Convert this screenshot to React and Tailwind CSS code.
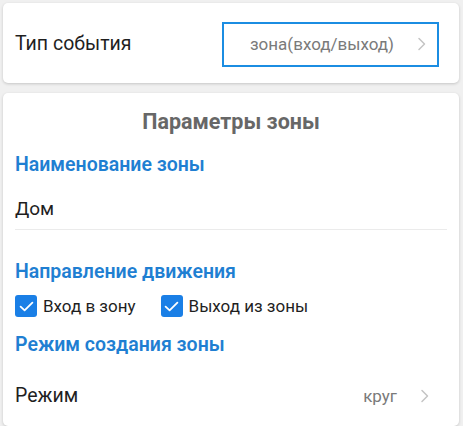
import React from 'react';

function Chevron() {
  return (
    <svg width="10" height="14" viewBox="0 0 10 14" fill="none" className="shrink-0">
      <path d="M2 1.5l5.5 5.5L2 12.5" stroke="#c4c4c4" strokeWidth="1.5" strokeLinecap="round" strokeLinejoin="round" />
    </svg>
  );
}

function Check({ label }) {
  return (
    <label className="flex items-center gap-[6px]">
      <span className="w-[22px] h-[22px] rounded-[3px] bg-[#1a7fe6] flex items-center justify-center">
        <svg width="15" height="11" viewBox="0 0 15 11" fill="none">
          <path d="M1.6 5.6l4 3.7L13.4 1.6" stroke="#fff" strokeWidth="1.8" strokeLinecap="round" strokeLinejoin="round" />
        </svg>
      </span>
      <span className="text-[17px] text-[#1f1f1f] leading-[22px]">{label}</span>
    </label>
  );
}

export default function App() {
  return (
    <div className="w-[463px] h-[426px] overflow-hidden bg-[#f0f0f0] pl-[3px] pr-[4px] pt-[3px] flex flex-col gap-[10px]" style={{ fontFamily: 'Roboto, "Noto Sans", sans-serif' }}>
      {/* event type */}
      <div className="bg-white rounded-[5px] shadow-[0_1px_3px_rgba(0,0,0,0.18)] h-[80px] shrink-0 flex items-center justify-between pl-[12px] pr-[20px] pt-[2px]">
        <span className="text-[19.5px] text-[#1f1f1f] leading-[26px]">Тип события</span>
        <div className="w-[217px] h-[45px] border-2 border-[#1b8de2] flex items-center justify-end gap-[23px] pr-[10px]">
          <span className="text-[17px] text-[#7a7a7a] leading-[22px]">зона(вход/выход)</span>
          <Chevron />
        </div>
      </div>

      {/* zone params */}
      <div className="bg-white rounded-[5px] shadow-[0_1px_3px_rgba(0,0,0,0.18)] flex-1 px-[12px] pt-[15px]">
        <h2 className="text-center text-[21.5px] font-bold text-[#676767] leading-[28px]">Параметры зоны</h2>

        <div className="mt-[16px] text-[19.5px] font-semibold text-[#1f7fd2] leading-[26px]">Наименование зоны</div>
        <div className="mt-[18px] pb-[7px] border-b border-[#ebebeb] text-[19px] text-[#1f1f1f] leading-[26px]">Дом</div>

        <div className="mt-[29px] text-[19.5px] font-semibold text-[#1f7fd2] leading-[26px]">Направление движения</div>
        <div className="mt-[10px] flex items-center gap-[25px]">
          <Check label="Вход в зону" />
          <Check label="Выход из зоны" />
        </div>

        <div className="mt-[15px] text-[19.5px] font-semibold text-[#1f7fd2] leading-[26px]">Режим создания зоны</div>

        <div className="mt-[25px] flex items-center justify-between pr-[17px]">
          <span className="text-[19.5px] text-[#1f1f1f] leading-[26px]">Режим</span>
          <div className="flex items-center gap-[23px]">
            <span className="text-[17px] text-[#7a7a7a] leading-[22px]">круг</span>
            <Chevron />
          </div>
        </div>
      </div>
    </div>
  );
}
